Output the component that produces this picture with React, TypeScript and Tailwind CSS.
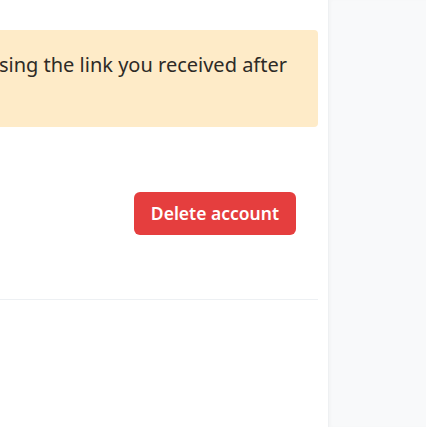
export default function App() {
  return (
    <div className="flex w-[426px] h-[427px] overflow-hidden bg-white font-['Noto_Sans','Open_Sans',sans-serif]">
      <main className="flex-1 min-w-0 overflow-hidden pr-[10px]">
        <div className="flex flex-col">
          <div className="mt-[30px] h-[97px] bg-[#feebc8] rounded-r-[4px] flex justify-end pr-[31px] pt-[20px]">
            <p className="shrink-0 whitespace-nowrap text-[20px] leading-[30px] text-[#2d2a26]">
              Your account will be deleted permanently. You can still restore it using the link you received after
              <br />
              requesting deletion.
            </p>
          </div>
          <div className="flex justify-end pr-[22px] mt-[65px]">
            <button className="h-[43px] px-[17px] rounded-[6px] bg-[#e53e3e] text-white text-[17.5px] font-semibold leading-none">
              Delete account
            </button>
          </div>
          <div className="mt-[64px] h-px bg-[#edf0f3]" />
        </div>
      </main>
      <aside className="w-[98px] shrink-0 bg-[#f8f9fa] border-l border-[#eef0f2] shadow-[inset_2px_0_3px_rgba(0,0,0,0.02)]" />
    </div>
  );
}
